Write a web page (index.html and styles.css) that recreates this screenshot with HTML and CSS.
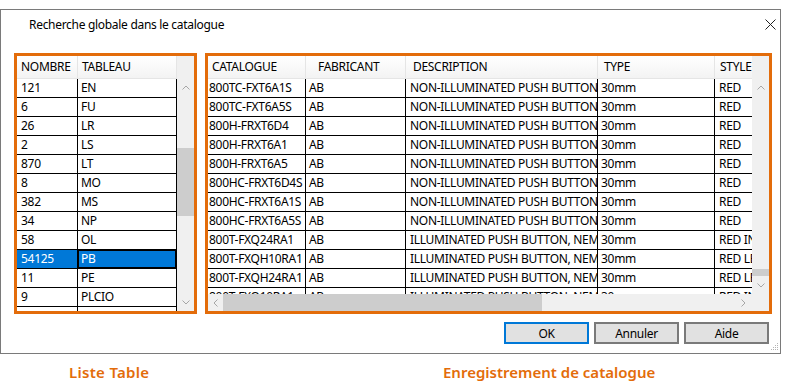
FILE: index.html
```html
<!DOCTYPE html>
<html lang="fr">
<head>
    <meta charset="UTF-8">
    <title>Recherche globale dans le catalogue</title>
    <link rel="stylesheet" href="styles.css">
</head>
<body>

    <div class="dialog">
        <div class="title-bar">
            <span class="title">Recherche globale dans le catalogue</span>
            <svg class="close-icon" width="11" height="11" viewBox="0 0 11 11">
                <path d="M0.5 0.5 L10.5 10.5 M10.5 0.5 L0.5 10.5" stroke="#222" stroke-width="1" fill="none"/>
            </svg>
        </div>

        <div class="panes">
            <!-- Liste des tableaux -->
            <div class="pane pane-tables">
                <div class="grid">
                    <div class="grid-head">
                        <div class="hcell col-nombre">NOMBRE</div>
                        <div class="hcell col-tableau">TABLEAU</div>
                    </div>
                    <div class="grid-body">
                        <div class="row"><div class="cell col-nombre">121</div><div class="cell col-tableau">EN</div></div>
                        <div class="row"><div class="cell col-nombre">6</div><div class="cell col-tableau">FU</div></div>
                        <div class="row"><div class="cell col-nombre">26</div><div class="cell col-tableau">LR</div></div>
                        <div class="row"><div class="cell col-nombre">2</div><div class="cell col-tableau">LS</div></div>
                        <div class="row"><div class="cell col-nombre">870</div><div class="cell col-tableau">LT</div></div>
                        <div class="row"><div class="cell col-nombre">8</div><div class="cell col-tableau">MO</div></div>
                        <div class="row"><div class="cell col-nombre">382</div><div class="cell col-tableau">MS</div></div>
                        <div class="row"><div class="cell col-nombre">34</div><div class="cell col-tableau">NP</div></div>
                        <div class="row"><div class="cell col-nombre">58</div><div class="cell col-tableau">OL</div></div>
                        <div class="row selected"><div class="cell col-nombre">54125</div><div class="cell col-tableau focused">PB</div></div>
                        <div class="row"><div class="cell col-nombre">11</div><div class="cell col-tableau">PE</div></div>
                        <div class="row"><div class="cell col-nombre">9</div><div class="cell col-tableau">PLCIO</div></div>
                        <div class="row"><div class="cell col-nombre">4</div><div class="cell col-tableau">PP</div></div>
                    </div>
                </div>
                <div class="vscroll">
                    <div class="vscroll-head"></div>
                    <div class="vscroll-track">
                        <div class="scroll-btn">
                            <svg width="8" height="5" viewBox="0 0 8 5"><path d="M0.5 4.5 L4 1 L7.5 4.5" stroke="#a6a6a6" fill="none"/></svg>
                        </div>
                        <div class="thumb thumb-tables"></div>
                        <div class="scroll-btn scroll-btn-end">
                            <svg width="8" height="5" viewBox="0 0 8 5"><path d="M0.5 0.5 L4 4 L7.5 0.5" stroke="#a6a6a6" fill="none"/></svg>
                        </div>
                    </div>
                </div>
            </div>

            <!-- Enregistrements du catalogue -->
            <div class="pane pane-records">
                <div class="records-main">
                    <div class="grid">
                        <div class="grid-head">
                            <div class="hcell col-cat">CATALOGUE</div>
                            <div class="hcell col-fab">FABRICANT</div>
                            <div class="hcell col-desc">DESCRIPTION</div>
                            <div class="hcell col-type">TYPE</div>
                            <div class="hcell col-style">STYLE</div>
                        </div>
                        <div class="grid-body">
                            <div class="row"><div class="cell col-cat">800TC-FXT6A1S</div><div class="cell col-fab">AB</div><div class="cell col-desc">NON-ILLUMINATED PUSH BUTTON</div><div class="cell col-type">30mm</div><div class="cell col-style">RED</div></div>
                            <div class="row"><div class="cell col-cat">800TC-FXT6A5S</div><div class="cell col-fab">AB</div><div class="cell col-desc">NON-ILLUMINATED PUSH BUTTON</div><div class="cell col-type">30mm</div><div class="cell col-style">RED</div></div>
                            <div class="row"><div class="cell col-cat">800H-FRXT6D4</div><div class="cell col-fab">AB</div><div class="cell col-desc">NON-ILLUMINATED PUSH BUTTON</div><div class="cell col-type">30mm</div><div class="cell col-style">RED</div></div>
                            <div class="row"><div class="cell col-cat">800H-FRXT6A1</div><div class="cell col-fab">AB</div><div class="cell col-desc">NON-ILLUMINATED PUSH BUTTON</div><div class="cell col-type">30mm</div><div class="cell col-style">RED</div></div>
                            <div class="row"><div class="cell col-cat">800H-FRXT6A5</div><div class="cell col-fab">AB</div><div class="cell col-desc">NON-ILLUMINATED PUSH BUTTON</div><div class="cell col-type">30mm</div><div class="cell col-style">RED</div></div>
                            <div class="row"><div class="cell col-cat">800HC-FRXT6D4S</div><div class="cell col-fab">AB</div><div class="cell col-desc">NON-ILLUMINATED PUSH BUTTON</div><div class="cell col-type">30mm</div><div class="cell col-style">RED</div></div>
                            <div class="row"><div class="cell col-cat">800HC-FRXT6A1S</div><div class="cell col-fab">AB</div><div class="cell col-desc">NON-ILLUMINATED PUSH BUTTON</div><div class="cell col-type">30mm</div><div class="cell col-style">RED</div></div>
                            <div class="row"><div class="cell col-cat">800HC-FRXT6A5S</div><div class="cell col-fab">AB</div><div class="cell col-desc">NON-ILLUMINATED PUSH BUTTON</div><div class="cell col-type">30mm</div><div class="cell col-style">RED</div></div>
                            <div class="row"><div class="cell col-cat">800T-FXQ24RA1</div><div class="cell col-fab">AB</div><div class="cell col-desc">ILLUMINATED PUSH BUTTON, NEMA 4/13</div><div class="cell col-type">30mm</div><div class="cell col-style">RED INCANDESCENT</div></div>
                            <div class="row"><div class="cell col-cat">800T-FXQH10RA1</div><div class="cell col-fab">AB</div><div class="cell col-desc">ILLUMINATED PUSH BUTTON, NEMA 4/13</div><div class="cell col-type">30mm</div><div class="cell col-style">RED LED</div></div>
                            <div class="row"><div class="cell col-cat">800T-FXQH24RA1</div><div class="cell col-fab">AB</div><div class="cell col-desc">ILLUMINATED PUSH BUTTON, NEMA 4/13</div><div class="cell col-type">30mm</div><div class="cell col-style">RED LED</div></div>
                            <div class="row"><div class="cell col-cat">800T-FXQ10RA1</div><div class="cell col-fab">AB</div><div class="cell col-desc">ILLUMINATED PUSH BUTTON, NEMA 4/13</div><div class="cell col-type">30mm</div><div class="cell col-style">RED INCANDESCENT</div></div>
                        </div>
                    </div>
                    <div class="hscroll">
                        <div class="scroll-btn scroll-btn-h">
                            <svg width="5" height="8" viewBox="0 0 5 8"><path d="M4.5 0.5 L1 4 L4.5 7.5" stroke="#a6a6a6" fill="none"/></svg>
                        </div>
                        <div class="thumb thumb-h"></div>
                        <div class="scroll-btn scroll-btn-h scroll-btn-right">
                            <svg width="5" height="8" viewBox="0 0 5 8"><path d="M0.5 0.5 L4 4 L0.5 7.5" stroke="#a6a6a6" fill="none"/></svg>
                        </div>
                    </div>
                </div>
                <div class="vscroll">
                    <div class="vscroll-head"></div>
                    <div class="vscroll-track">
                        <div class="scroll-btn">
                            <svg width="8" height="5" viewBox="0 0 8 5"><path d="M0.5 4.5 L4 1 L7.5 4.5" stroke="#a6a6a6" fill="none"/></svg>
                        </div>
                        <div class="thumb thumb-records"></div>
                        <div class="scroll-btn scroll-btn-end">
                            <svg width="8" height="5" viewBox="0 0 8 5"><path d="M0.5 0.5 L4 4 L7.5 0.5" stroke="#a6a6a6" fill="none"/></svg>
                        </div>
                    </div>
                    <div class="vscroll-foot"></div>
                </div>
            </div>
        </div>

        <div class="actions">
            <button class="btn btn-default">OK</button>
            <button class="btn">Annuler</button>
            <button class="btn">Aide</button>
        </div>

        <!-- poignée de redimensionnement -->
        <svg class="grip" width="8" height="8" viewBox="0 0 8 8">
            <rect x="6" y="0" width="1" height="1" fill="#b4b4b4"/>
            <rect x="4" y="2" width="1" height="1" fill="#b4b4b4"/>
            <rect x="6" y="2" width="1" height="1" fill="#b4b4b4"/>
            <rect x="2" y="4" width="1" height="1" fill="#b4b4b4"/>
            <rect x="4" y="4" width="1" height="1" fill="#b4b4b4"/>
            <rect x="6" y="4" width="1" height="1" fill="#b4b4b4"/>
            <rect x="0" y="6" width="1" height="1" fill="#b4b4b4"/>
            <rect x="2" y="6" width="1" height="1" fill="#b4b4b4"/>
            <rect x="4" y="6" width="1" height="1" fill="#b4b4b4"/>
            <rect x="6" y="6" width="1" height="1" fill="#b4b4b4"/>
        </svg>
    </div>

    <div class="captions">
        <span class="caption caption-tables">Liste Table</span>
        <span class="caption">Enregistrement de catalogue</span>
    </div>

</body>
</html>
```

FILE: styles.css
```css
* {
    box-sizing: border-box;
}

html, body {
    margin: 0;
    background: #fff;
}

body {
    width: 786px;
    height: 390px;
    overflow: hidden;
    padding-top: 9px;
    font-family: "Noto Sans", "Open Sans", sans-serif;
    font-size: 12px;
    letter-spacing: -0.3px;
    color: #000;
}

/* Fenêtre de dialogue */
.dialog {
    position: relative;
    width: 781px;
    height: 345px;
    border: 1px solid #7a7a7a;
    background: #fff;
    display: flex;
    flex-direction: column;
}

.title-bar {
    height: 43px;
    display: flex;
    justify-content: space-between;
    align-items: flex-start;
    padding: 7px 4px 0 28px;
}

.title {
    line-height: 16px;
}

.close-icon {
    margin-top: 2px;
}

.panes {
    display: flex;
    gap: 8px;
    padding-left: 13px;
    height: 261px;
}

.pane {
    display: flex;
    border: 3px solid #e36c0a;
}

.pane-tables {
    width: 183px;
}

.pane-records {
    width: 567px;
}

.records-main {
    width: 544px;
    display: flex;
    flex-direction: column;
}

/* Grilles */
.grid {
    flex: 1;
    min-width: 0;
    overflow: hidden;
    display: flex;
    flex-direction: column;
}

.grid-head {
    display: flex;
    height: 23px;
    flex-shrink: 0;
    background: linear-gradient(#fff, #f3f3f3);
    border-bottom: 1px solid #e5e5e5;
}

.hcell {
    flex-shrink: 0;
    line-height: 22px;
    padding-left: 4px;
    border-right: 1px solid #e5e5e5;
    white-space: nowrap;
    overflow: hidden;
}

.row {
    display: flex;
    height: 19px;
    flex-shrink: 0;
    border-bottom: 1px solid #000;
}

.cell {
    flex-shrink: 0;
    line-height: 18px;
    padding-left: 3px;
    border-right: 1px solid #000;
    white-space: nowrap;
    overflow: hidden;
}

.row.selected .cell {
    background: #0078d7;
    color: #fff;
}

.cell.focused {
    box-shadow: inset 0 0 0 1px #000;
}

/* Colonnes */
.col-nombre { width: 61px; }
.cell.col-nombre { padding-left: 4px; }
.col-tableau { width: 99px; }

.col-cat { width: 98px; }
.cell.col-cat { padding-left: 1px; }
.col-fab { width: 100px; }
.hcell.col-fab { padding-left: 12px; }
.col-desc { width: 192px; }
.hcell.col-desc { padding-left: 7px; }
.cell.col-desc { padding-left: 4px; }
.col-type { width: 117px; }
.hcell.col-type { padding-left: 6px; }
.col-style { width: 120px; }
.hcell.col-style { padding-left: 5px; }
.cell.col-style { padding-left: 4px; }

/* Barres de défilement */
.vscroll {
    width: 17px;
    flex-shrink: 0;
    display: flex;
    flex-direction: column;
    background: #f0f0f0;
}

.vscroll-head {
    height: 23px;
    flex-shrink: 0;
}

.vscroll-foot {
    height: 17px;
    flex-shrink: 0;
}

.vscroll-track {
    flex: 1;
    display: flex;
    flex-direction: column;
}

.scroll-btn {
    height: 17px;
    flex-shrink: 0;
    display: flex;
    align-items: center;
    justify-content: center;
}

.scroll-btn svg {
    display: block;
}

.scroll-btn-end {
    margin-top: auto;
}

.thumb {
    background: #cdcdcd;
    flex-shrink: 0;
}

.thumb-tables {
    margin-top: 52px;
    height: 68px;
}

.thumb-records {
    margin-top: 173px;
    height: 7px;
}

.hscroll {
    height: 17px;
    flex-shrink: 0;
    display: flex;
    background: #f0f0f0;
}

.scroll-btn-h {
    width: 15px;
    height: 17px;
}

.scroll-btn-right {
    width: 17px;
    margin-left: auto;
}

.thumb-h {
    width: 319px;
}

/* Boutons */
.actions {
    display: flex;
    justify-content: flex-end;
    gap: 5px;
    margin-top: 8px;
    padding-right: 11px;
}

.btn {
    width: 85px;
    height: 22px;
    padding: 0;
    font-family: inherit;
    font-size: 12px;
    letter-spacing: -0.3px;
    color: #000;
    background: #e1e1e1;
    border: 2px solid #7a7a7a;
}

.btn-default {
    border-color: #0078d7;
}

.grip {
    position: absolute;
    right: 1px;
    bottom: 2px;
}

/* Légendes sous la fenêtre */
.captions {
    display: flex;
    margin-top: 8px;
    padding-left: 69px;
    font-size: 15px;
    font-weight: 600;
    line-height: 20px;
    letter-spacing: 0;
    color: #e36c0a;
}

.caption-tables {
    width: 374px;
    letter-spacing: 0.3px;
}
```
